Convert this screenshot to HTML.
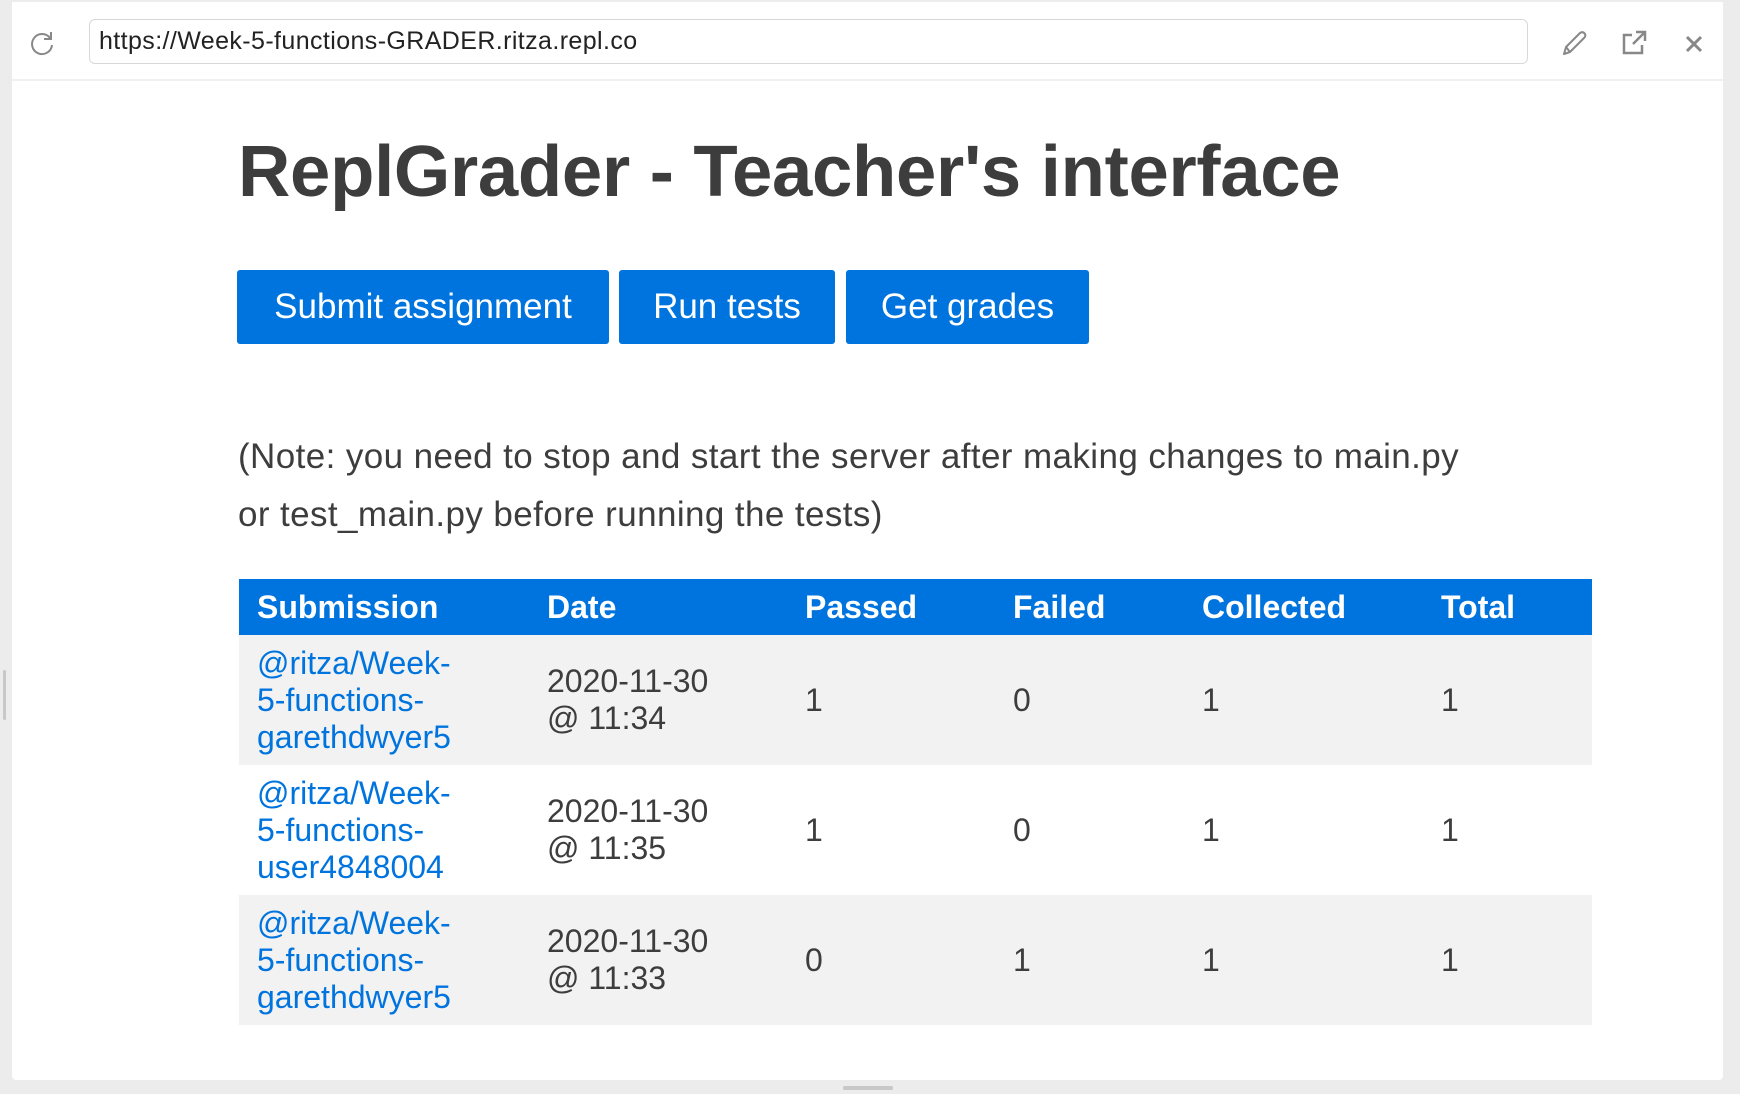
<!DOCTYPE html>
<html><head><meta charset="utf-8"><style>
*{margin:0;padding:0;box-sizing:border-box}
html,body{width:1740px;height:1094px;background:#ececec;overflow:hidden;font-family:"Liberation Sans",Arial,sans-serif}
#panel{position:absolute;left:12px;top:2px;width:1711px;height:1078px;background:#fff;border-radius:4px}
#bar{position:absolute;left:0;top:0;width:1711px;height:79px;border-bottom:2px solid #f0f0f0;background:#fff}
#url{position:absolute;left:77px;top:17px;width:1439px;height:45px;border:1px solid #d8d8d8;border-radius:6px;font-size:25px;letter-spacing:0.4px;color:#222;padding-left:9px;line-height:43px}
.ic{position:absolute}
h1{position:absolute;left:238px;top:130px;font-size:72.5px;font-weight:bold;color:#3d3d3d;white-space:nowrap;letter-spacing:-0.3px}
.btn{position:absolute;top:270px;height:74px;background:#0074de;color:#fff;font-size:35px;line-height:74px;text-align:center;border-radius:3px}
.note{position:absolute;left:238px;top:428px;font-size:35px;letter-spacing:0.4px;line-height:58px;color:#3d3d3d;width:1400px}
table{position:absolute;left:239px;top:579px;width:1353px;border-collapse:collapse;table-layout:fixed}
th{background:#0074de;color:#fff;font-size:32px;text-align:left;height:56px;padding:0 0 0 18px;font-weight:bold}
td{font-size:32px;color:#3d3d3d;padding:0 0 0 18px;height:130px;line-height:37px;vertical-align:middle}
tr.o td{background:#f2f2f2}
td a{color:#0074de;text-decoration:none}
</style></head><body>
<div style="position:absolute;left:3px;top:670px;width:3px;height:50px;background:#c8c8c8;border-radius:2px"></div>
<div style="position:absolute;left:843px;top:1086px;width:50px;height:4px;background:#c8c8c8;border-radius:2px"></div>
<div id="panel">
<div id="bar">
<svg class="ic" style="left:16px;top:27px" width="28" height="28" viewBox="0 0 28 28"><path d="M22 9 A10 10 0 1 0 24 16" fill="none" stroke="#888" stroke-width="2"/><path d="M23 3 V10 H16" fill="none" stroke="#888" stroke-width="2"/></svg>
<div id="url">https://Week-5-functions-GRADER.ritza.repl.co</div>
<svg class="ic" style="left:1547px;top:26px" width="30" height="30" viewBox="0 0 30 30"><path d="M5 26 L7 19 L21 5 Q24 3 26 6 Q27 8 25 10 L11 24 Z M7 19 L11 24" fill="none" stroke="#888" stroke-width="2" stroke-linejoin="round"/></svg>
<svg class="ic" style="left:1607px;top:26px" width="30" height="30" viewBox="0 0 30 30"><path d="M13 7 H5 V25 H23 V17" fill="none" stroke="#888" stroke-width="2.5"/><path d="M14 16 L25 5 M17 4 H26 V13" fill="none" stroke="#888" stroke-width="2.5"/></svg>
<svg class="ic" style="left:1670px;top:30px" width="24" height="24" viewBox="0 0 24 24"><path d="M5 5 L19 19 M19 5 L5 19" stroke="#888" stroke-width="3"/></svg>
</div>
</div>
<h1>ReplGrader - Teacher's interface</h1>
<div class="btn" style="left:237px;width:372px">Submit assignment</div>
<div class="btn" style="left:619px;width:216px">Run tests</div>
<div class="btn" style="left:846px;width:243px">Get grades</div>
<div class="note">(Note: you need to stop and start the server after making changes to main.py<br>or test_main.py before running the tests)</div>
<table>
<colgroup><col style="width:290px"><col style="width:258px"><col style="width:208px"><col style="width:189px"><col style="width:239px"><col></colgroup>
<tr><th>Submission</th><th>Date</th><th>Passed</th><th>Failed</th><th>Collected</th><th>Total</th></tr>
<tr class="o"><td><a>@ritza/Week-<br>5-functions-<br>garethdwyer5</a></td><td>2020-11-30<br>@ 11:34</td><td>1</td><td>0</td><td>1</td><td>1</td></tr>
<tr><td><a>@ritza/Week-<br>5-functions-<br>user4848004</a></td><td>2020-11-30<br>@ 11:35</td><td>1</td><td>0</td><td>1</td><td>1</td></tr>
<tr class="o"><td><a>@ritza/Week-<br>5-functions-<br>garethdwyer5</a></td><td>2020-11-30<br>@ 11:33</td><td>0</td><td>1</td><td>1</td><td>1</td></tr>
</table>
</body></html>
